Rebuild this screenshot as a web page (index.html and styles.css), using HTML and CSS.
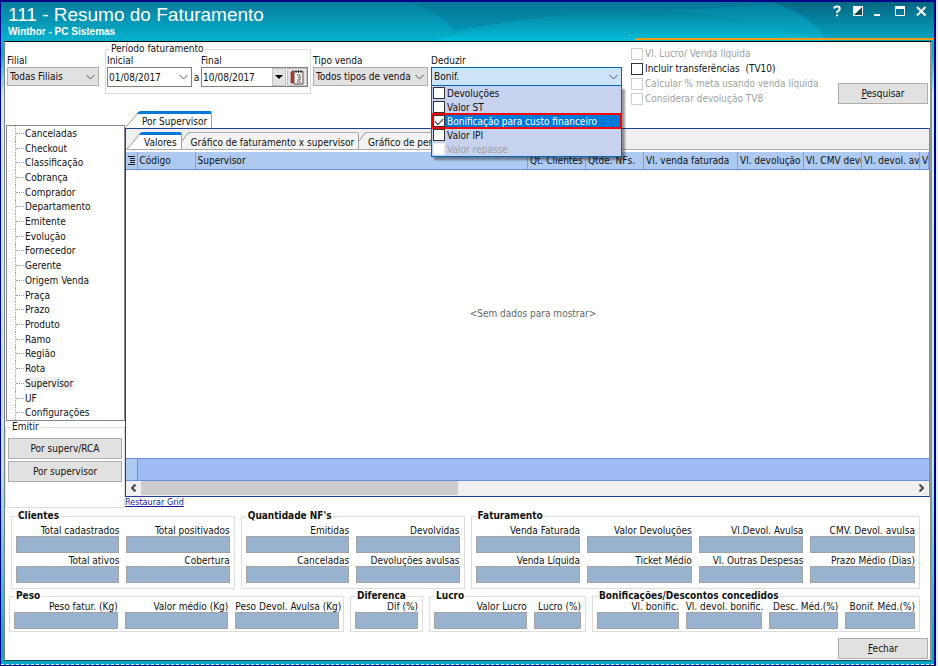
FILE: index.html
```html
<!DOCTYPE html>
<html lang="pt-BR">
  <head>
    <meta charset="UTF-8" />
    <meta name="viewport" content="width=device-width, initial-scale=1.0" />
    <title>111 - Resumo do Faturamento</title>
    <link rel="stylesheet" href="styles.css">
  </head>
  <body>
    <div class="window">
      <header class="titlebar">
        <svg class="waves" viewBox="0 0 932 39" preserveAspectRatio="none" aria-hidden="true">
          <defs>
            <linearGradient id="sea" x1="0" y1="0" x2="0" y2="1">
              <stop offset="0" stop-color="#067d9f" />
              <stop offset="1" stop-color="#06b2cd" />
            </linearGradient>
            <linearGradient id="deep" x1="0" y1="0" x2="0" y2="1">
              <stop offset="0" stop-color="#056783" />
              <stop offset="1" stop-color="#06a5c0" />
            </linearGradient>
            <linearGradient id="crest" x1="0" y1="0" x2="0" y2="1">
              <stop offset="0" stop-color="#067f9c" />
              <stop offset="1" stop-color="#04bfdb" />
            </linearGradient>
          </defs>
          <rect width="932" height="39" fill="url(#sea)" />
          <path d="M408 0 Q440 10 452 29 Q540 12 640 9 Q740 6 785 0 Z" fill="#046a8a" opacity=".3" />
          <path d="M430 39 C500 20 570 12 640 9 C690 7 740 15 820 39 Z" fill="url(#crest)" />
          <path d="M770 0 Q812 14 824 39 L932 39 L932 0 Z" fill="url(#deep)" />
        </svg>
        <div class="titles">
          <h1>111 - Resumo do Faturamento</h1>
          <p>Winthor - PC Sistemas</p>
        </div>
        <div class="window-buttons">
          <button type="button" aria-label="Ajuda">
            <svg width="12" height="12" viewBox="0 0 12 12"><path d="M3 3.5 Q3.5 1.5 6 1.5 Q8.8 1.5 8.8 3.8 Q8.8 5.2 7.2 6 Q6 6.6 6 8 M6 9.5 V11.2" fill="none" stroke="#fff" stroke-width="2" /></svg>
          </button>
          <button type="button" aria-label="Tema">
            <svg width="12" height="12" viewBox="0 0 12 12"><path d="M1.5 1.5 H10.5 V10.5 H1.5 Z" fill="#0a4a60" stroke="#fff" /><path d="M1 1 H11 L1 11 Z" fill="#fff" /></svg>
          </button>
          <button type="button" aria-label="Minimizar">
            <svg width="12" height="12" viewBox="0 0 12 12"><path d="M1 9 H7 V11 H1 Z" fill="#fff" /></svg>
          </button>
          <button type="button" aria-label="Maximizar">
            <svg width="12" height="12" viewBox="0 0 12 12"><path d="M1.5 2 V10.5 H10.5 V2" fill="none" stroke="#fff" /><path d="M1 1 H11 V4 H1 Z" fill="#fff" /></svg>
          </button>
          <button type="button" aria-label="Fechar janela">
            <svg width="12" height="12" viewBox="0 0 12 12"><path d="M2 2 L10.5 10.5 M10.5 2 L2 10.5" stroke="#fff" stroke-width="2" /></svg>
          </button>
        </div>
      </header>

      <main class="client">
        <form class="toolbar">
          <div class="field filial">
            <label for="filial">Filial</label>
            <span class="select-box">
              <select id="filial"><option>Todas Filiais</option></select>
              <svg class="chevron" width="9" height="6" viewBox="0 0 9 6"><path d="M.5 1 L4.5 5 L8.5 1" /></svg>
            </span>
          </div>

          <fieldset class="period">
            <legend>Período faturamento</legend>
            <div class="period-row">
              <div class="field start">
                <label for="inicial">Inicial</label>
                <span class="date-box">
                  <input id="inicial" type="text" value="01/08/2017" />
                  <svg class="chevron" width="9" height="6" viewBox="0 0 9 6"><path d="M.5 1 L4.5 5 L8.5 1" /></svg>
                </span>
              </div>
              <span class="until">a</span>
              <div class="field end">
                <label for="final">Final</label>
                <span class="date-box">
                  <input id="final" type="text" value="10/08/2017" />
                  <button type="button" class="drop" aria-label="Abrir data final">
                    <svg width="8" height="4" viewBox="0 0 8 4"><path d="M0 0 H8 L4 4 Z" fill="#000" /></svg>
                  </button>
                  <button type="button" class="calendar" aria-label="Calendário">
                    <svg width="14" height="16" viewBox="0 0 14 16">
                      <path d="M1 3 L3.5 1.500 V14 H1 Z" fill="#b03a2e" stroke="#7b241c" stroke-width=".6" />
                      <path d="M4 2.500 H13 V15 H4 Z" fill="#f2f0ec" stroke="#55504c" />
                      <path d="M6 1 V4 M8.500 1 V4 M11 1 V4" stroke="#333" />
                      <path d="M7 6 H10 V8.500 H8 M10 8.500 V11 H7 M7 13 H11" fill="none" stroke="#666" />
                    </svg>
                  </button>
                </span>
              </div>
            </div>
          </fieldset>

          <div class="field tipo">
            <label for="tipo">Tipo venda</label>
            <span class="select-box">
              <select id="tipo"><option>Todos tipos de venda</option></select>
              <svg class="chevron" width="9" height="6" viewBox="0 0 9 6"><path d="M.5 1 L4.5 5 L8.5 1" /></svg>
            </span>
          </div>

          <div class="field deduzir">
            <label for="deduzir">Deduzir</label>
            <span class="select-box open">
              <select id="deduzir"><option>Bonif.</option></select>
              <svg class="chevron" width="9" height="6" viewBox="0 0 9 6"><path d="M.5 1 L4.5 5 L8.5 1" /></svg>
            </span>
            <div class="dropdown">
              <label><input type="checkbox" />Devoluções</label>
              <label><input type="checkbox" />Valor ST</label>
              <label class="current"><input type="checkbox" checked />Bonificação para custo financeiro</label>
              <label><input type="checkbox" />Valor IPI</label>
              <label class="disabled"><input type="checkbox" disabled />Valor repasse</label>
            </div>
          </div>

          <div class="options">
            <label class="disabled"><input type="checkbox" disabled />Vl. Lucro/ Venda líquida</label>
            <label><input type="checkbox" />Incluir transferências &nbsp;(TV10)</label>
            <label class="disabled"><input type="checkbox" disabled />Calcular % meta usando venda líquida</label>
            <label class="disabled"><input type="checkbox" disabled />Considerar devolução TV8</label>
          </div>

          <button type="button" class="btn search"><u>P</u>esquisar</button>
        </form>

        <div class="workspace">
          <aside class="sidebar">
            <ul class="tree">
              <li><span>Canceladas</span></li>
              <li><span>Checkout</span></li>
              <li><span>Classificação</span></li>
              <li><span>Cobrança</span></li>
              <li><span>Comprador</span></li>
              <li><span>Departamento</span></li>
              <li><span>Emitente</span></li>
              <li><span>Evolução</span></li>
              <li><span>Fornecedor</span></li>
              <li><span>Gerente</span></li>
              <li><span>Origem Venda</span></li>
              <li><span>Praça</span></li>
              <li><span>Prazo</span></li>
              <li><span>Produto</span></li>
              <li><span>Ramo</span></li>
              <li><span>Região</span></li>
              <li><span>Rota</span></li>
              <li class="selected"><span>Supervisor</span></li>
              <li><span>UF</span></li>
              <li><span>Configurações</span></li>
            </ul>
            <fieldset class="emit">
              <legend>Emitir</legend>
              <button type="button" class="btn">Por superv/RCA</button>
              <button type="button" class="btn">Por supervisor</button>
            </fieldset>
          </aside>

          <section class="content">
            <div class="tabs outer-tabs">
              <button type="button" class="tab active">
                <svg width="16" height="17" viewBox="0 0 16 17"><path d="M0 17 L13 2 Q14 0 16 0 V17 Z" fill="#fff" /><path d="M0 17 L13 2 L15 1" class="edge" /><path d="M12 3 Q13 0 16 0 V3 Z" fill="#0078d7" /></svg>
                <span>Por Supervisor</span>
              </button>
            </div>
            <div class="panel">
              <div class="tabs inner-tabs">
                <button type="button" class="tab active">
                  <svg width="16" height="17" viewBox="0 0 16 17"><path d="M0 17 L13 2 Q14 0 16 0 V17 Z" fill="#fff" /><path d="M0 17 L13 2 L15 1" class="edge" /><path d="M12 3 Q13 0 16 0 V3 Z" fill="#0078d7" /></svg>
                  <span>Valores</span>
                </button>
                <button type="button" class="tab">
                  <svg width="8" height="17" viewBox="0 0 8 17"><path d="M0 17 V9 L6 1 L8 .5 V17 Z" fill="#f3f3f3" /><path d="M0 9 L6 1 L8 .5" class="edge" /></svg>
                  <span>Gráfico de faturamento x supervisor</span>
                </button>
                <button type="button" class="tab">
                  <svg width="8" height="17" viewBox="0 0 8 17"><path d="M0 17 V9 L6 1 L8 .5 V17 Z" fill="#f3f3f3" /><path d="M0 9 L6 1 L8 .5" class="edge" /></svg>
                  <span>Gráfico de percentuais</span>
                </button>
              </div>

              <table class="grid-head">
                <colgroup>
                  <col class="c-mark" /><col class="c-code" /><col /><col class="c-num" /><col class="c-num" />
                  <col class="c-sale" /><col class="c-dev" /><col class="c-num" /><col class="c-num" /><col class="c-last" />
                </colgroup>
                <thead>
                  <tr>
                    <th class="mark">
                      <svg width="7" height="9" viewBox="0 0 7 9"><path d="M0 .5 H7 M2 2.500 H7 M2 4.500 H7 M2 6.500 H7 M0 8.500 H7" stroke="#222" /></svg>
                    </th>
                    <th>Código</th>
                    <th>Supervisor</th>
                    <th>Qt. Clientes</th>
                    <th>Qtde. NFs.</th>
                    <th>Vl. venda faturada</th>
                    <th>Vl. devolução</th>
                    <th>Vl. CMV devolução</th>
                    <th>Vl. devol. avulsa</th>
                    <th>V</th>
                  </tr>
                </thead>
              </table>
              <div class="grid-empty">&lt;Sem dados para mostrar&gt;</div>
              <div class="grid-footer"></div>
              <div class="scrollbar">
                <button type="button" aria-label="Rolar para a esquerda"><svg width="5" height="8" viewBox="0 0 5 8"><path d="M4.5 .5 L1 4 L4.5 7.500" /></svg></button>
                <div class="track"><div class="thumb"></div></div>
                <button type="button" aria-label="Rolar para a direita"><svg width="5" height="8" viewBox="0 0 5 8"><path d="M.5 .5 L4 4 L.5 7.500" /></svg></button>
              </div>
            </div>
            <a class="restore" href="#">Restaurar Grid</a>
          </section>
        </div>

        <div class="groups totals">
          <fieldset>
            <legend>Clientes</legend>
            <div class="cells two">
              <label>Total cadastrados<input type="text" readonly /></label>
              <label>Total positivados<input type="text" readonly /></label>
              <label>Total ativos<input type="text" readonly /></label>
              <label>Cobertura<input type="text" readonly /></label>
            </div>
          </fieldset>
          <fieldset>
            <legend>Quantidade NF's</legend>
            <div class="cells two">
              <label>Emitidas<input type="text" readonly /></label>
              <label>Devolvidas<input type="text" readonly /></label>
              <label>Canceladas<input type="text" readonly /></label>
              <label>Devoluções avulsas<input type="text" readonly /></label>
            </div>
          </fieldset>
          <fieldset>
            <legend>Faturamento</legend>
            <div class="cells four">
              <label>Venda Faturada<input type="text" readonly /></label>
              <label>Valor Devoluções<input type="text" readonly /></label>
              <label>Vl.Devol. Avulsa<input type="text" readonly /></label>
              <label>CMV. Devol. avulsa<input type="text" readonly /></label>
              <label>Venda Líquida<input type="text" readonly /></label>
              <label>Ticket Médio<input type="text" readonly /></label>
              <label>Vl. Outras Despesas<input type="text" readonly /></label>
              <label>Prazo Médio (Dias)<input type="text" readonly /></label>
            </div>
          </fieldset>
        </div>

        <div class="groups rates">
          <fieldset>
            <legend>Peso</legend>
            <div class="cells three">
              <label>Peso fatur. (Kg)<input type="text" readonly /></label>
              <label>Valor médio (Kg)<input type="text" readonly /></label>
              <label>Peso Devol. Avulsa (Kg)<input type="text" readonly /></label>
            </div>
          </fieldset>
          <fieldset>
            <legend>Diferenca</legend>
            <div class="cells">
              <label>Dif (%)<input type="text" readonly /></label>
            </div>
          </fieldset>
          <fieldset>
            <legend>Lucro</legend>
            <div class="cells profit">
              <label>Valor Lucro<input type="text" readonly /></label>
              <label>Lucro (%)<input type="text" readonly /></label>
            </div>
          </fieldset>
          <fieldset>
            <legend>Bonificações/Descontos concedidos</legend>
            <div class="cells bonus">
              <label>Vl. bonific.<input type="text" readonly /></label>
              <label>Vl. devol. bonific.<input type="text" readonly /></label>
              <label>Desc. Méd.(%)<input type="text" readonly /></label>
              <label>Bonif. Méd.(%)<input type="text" readonly /></label>
            </div>
          </fieldset>
        </div>

        <footer class="actions">
          <button type="button" class="btn"><u>F</u>echar</button>
        </footer>
      </main>
      <div class="bottom-edge"></div>
    </div>
  </body>
</html>
```

FILE: styles.css
```css
* {
  margin: 0;
  padding: 0;
  box-sizing: border-box;
}

body,
button,
input,
select {
  font-family: "DejaVu Sans Condensed", "DejaVu Sans", sans-serif;
  font-size: 10px;
  color: #111;
}

body {
  background: #e4eef8;
}

/* window frame */
.window {
  min-height: 100vh;
  margin-right: 2px;
  border: solid #00008b;
  border-width: 2px 2px 1px 1px;
  background: linear-gradient(#06b2cd 8%, #c8f2f8 14%, #b8ecf4 70%, #08aac6 97%);
  display: flex;
  flex-direction: column;
}

.titlebar {
  position: relative;
  height: 39px;
  display: flex;
  justify-content: space-between;
  color: #fff;
  font-family: "Liberation Sans", sans-serif;
}

.titlebar::after {
  content: "";
  position: absolute;
  right: 0;
  bottom: 1px;
  width: 32%;
  height: 2px;
  background: #f09a1a;
}

.waves {
  position: absolute;
  width: 100%;
  height: 100%;
}

.titles {
  position: relative;
  padding: 2px 7px;
}

.titles h1 {
  font-size: 19px;
  font-weight: normal;
  line-height: 22px;
}

.titles p {
  font-size: 10px;
  font-weight: bold;
  line-height: 12px;
}

.window-buttons {
  position: relative;
  display: flex;
  align-items: flex-start;
  gap: 9px;
  padding: 3px 7px;
}

.window-buttons button {
  width: 12px;
  height: 12px;
  border: none;
  background: none;
}

.window-buttons svg {
  display: block;
}

.client {
  flex: 1;
  display: flex;
  flex-direction: column;
  margin: 0 2px 0 3px;
  border: 1px solid #000;
  border-left-color: #808080;
  border-right: 2px solid #909090;
  border-bottom-color: #1c4a50;
  background: #fff;
}

.bottom-edge {
  height: 4px;
  background: #04a6c2;
  border-bottom: 1px dashed #d8f0f4;
}

/* shared controls */
fieldset {
  min-width: 0;
  border: 1px solid #dcdcdc;
}

.btn {
  height: 21px;
  border: 1px solid #adadad;
  background: #e1e1e1;
}

.disabled {
  color: #a0a0a0;
}

input[type="checkbox"] {
  appearance: none;
  flex: none;
  width: 12px;
  height: 12px;
  border: 1px solid #333;
  background: #fff;
}

input[type="checkbox"]:disabled {
  border-color: #ccc;
}

input[type="checkbox"]:checked::after {
  content: "";
  display: block;
  width: 7px;
  height: 4px;
  margin: 2px 1px;
  border: solid #222;
  border-width: 0 0 1px 1px;
  transform: rotate(-45deg);
}

.chevron {
  fill: none;
  stroke: #555;
}

/* toolbar */
.toolbar {
  height: 69px;
  display: flex;
  align-items: flex-start;
  padding: 0 2px;
}

.field {
  position: relative;
  display: flex;
  flex-direction: column;
}

.toolbar > .field {
  padding-top: 13px;
}

.field > label {
  line-height: 12px;
}

.select-box {
  position: relative;
  display: flex;
}

.select-box select {
  appearance: none;
  width: 100%;
  height: 19px;
  padding: 0 2px;
  border: 1px solid #adadad;
  border-radius: 0;
  background: #e1e1e1;
}

.select-box .chevron {
  position: absolute;
  right: 4px;
  top: 7px;
}

.select-box.open select {
  border-color: #0067b8;
  background: #cce4f7;
}

.filial {
  width: 92px;
  margin-right: 6px;
}

.period {
  width: 206px;
  height: 51px;
  padding: 0 1px;
  margin: 1px 2px 0 0;
}

.period legend {
  margin-left: 3px;
  padding: 0 1px;
  line-height: 12px;
}

.period-row {
  display: flex;
  align-items: flex-end;
}

.start {
  width: 85px;
}

.end {
  width: 107px;
}

.until {
  width: 9px;
  text-align: center;
  line-height: 18px;
}

.date-box {
  display: flex;
  align-items: center;
  height: 20px;
  border: 1px solid #808080;
  background: #fff;
}

.date-box input {
  flex: 1;
  min-width: 0;
  padding: 0 1px;
  border: none;
}

.date-box .chevron {
  margin-right: 3px;
}

.date-box button {
  height: 18px;
  border: 1px solid #c4c4c4;
  background: #e4e4e4;
  display: flex;
  align-items: center;
  justify-content: center;
}

.drop {
  width: 14px;
}

.calendar {
  width: 20px;
  margin-left: 1px;
}

.tipo {
  width: 115px;
  margin-right: 3px;
}

.deduzir {
  width: 191px;
  margin-right: 9px;
}

.dropdown {
  position: absolute;
  top: 100%;
  left: 0;
  right: 0;
  z-index: 2;
  border: 1px solid #0067b8;
  border-top: none;
  background: #c7d2ef;
  box-shadow: 3px 3px 2px rgba(0, 0, 0, 0.4);
}

.dropdown label {
  display: flex;
  align-items: center;
  gap: 2px;
  height: 14px;
  padding-left: 1px;
}

.dropdown label.current {
  outline: 2px solid #f00;
  outline-offset: -1px;
  background: #0078d7;
  color: #fff;
}

.dropdown input:disabled {
  border-color: #eee;
}

.options {
  flex: 1;
  padding-top: 4px;
}

.options label {
  display: flex;
  align-items: center;
  gap: 2px;
  height: 15px;
  white-space: nowrap;
}

.search {
  width: 90px;
  margin-top: 41px;
}

/* sidebar */
.workspace {
  flex: 1;
  display: flex;
}

.sidebar {
  width: 120px;
  padding-top: 14px;
  display: flex;
  flex-direction: column;
}

.tree {
  flex: 1;
  display: flex;
  flex-direction: column;
  margin-left: 1px;
  border: 1px solid #828790;
  list-style: none;
}

.tree li {
  flex: 1;
  display: flex;
  align-items: center;
  margin-left: 8px;
  border-left: 1px dotted #a0a0a0;
}

.tree li::before {
  content: "";
  width: 8px;
  border-top: 1px dotted #a0a0a0;
}

.tree li span {
  padding: 0 2px 0 1px;
  line-height: 13px;
}

.tree .selected span {
  background: #f0f0f0;
}

.emit {
  height: 87px;
  padding: 5px 2px 0;
  display: flex;
  flex-direction: column;
  gap: 2px;
}

.emit legend {
  margin-left: 2px;
  padding: 0 2px;
  line-height: 12px;
}

/* tabs and grid */
.content {
  flex: 1;
  min-width: 0;
  display: flex;
  flex-direction: column;
  align-items: flex-start;
}

.tabs {
  display: flex;
}

.tab {
  display: flex;
  height: 17px;
  border: none;
  background: none;
}

.tab span {
  padding: 0 4px 0 1px;
  border-top: 1px solid #b0b0b0;
  border-right: 1px solid #a0a0a0;
  border-radius: 0 2px 0 0;
  background: #f3f3f3;
  line-height: 19px;
  height: 17px;
}

.tab.active span {
  border-top: 3px solid #0078d7;
  background: #fff;
  line-height: 15px;
}

.edge {
  fill: none;
  stroke: #999;
}

.panel {
  flex: 1;
  align-self: stretch;
  display: flex;
  flex-direction: column;
  border: 1px solid #1c3f94;
  border-right-color: #7090d8;
}

.inner-tabs {
  height: 23px;
  padding: 3px 1px 0;
  background: linear-gradient(#f0f0f0 20px, #aaa 20px, #aaa 21px, #fff 21px);
}

.grid-head {
  width: 100%;
  table-layout: fixed;
  border-collapse: collapse;
}

.grid-head th {
  height: 17px;
  padding: 0 2px;
  border-right: 1px solid #7e9fdc;
  border-bottom: 1px solid #6c8fd8;
  background: #aecaf0;
  font-weight: normal;
  text-align: left;
  white-space: nowrap;
  overflow: hidden;
}

.c-mark {
  width: 11px;
}

.c-code {
  width: 58px;
}

.c-num {
  width: 58px;
}

.c-sale {
  width: 94px;
}

.c-dev {
  width: 66px;
}

.c-last {
  width: 9px;
}

.mark svg {
  display: block;
}

.grid-empty {
  flex: 1;
  display: flex;
  align-items: center;
  justify-content: center;
  padding-left: 11px;
  color: #666;
}

.grid-footer {
  height: 23px;
  border: solid #6c8fd8;
  border-width: 1px 0;
  background: linear-gradient(90deg, #aecaf0 11px, #6c8fd8 11px, #6c8fd8 12px, #9fbdf4 12px);
}

.scrollbar {
  display: flex;
  height: 15px;
  background: #f0f0f0;
}

.scrollbar button {
  width: 15px;
  border: none;
  background: none;
}

.scrollbar path {
  fill: none;
  stroke: #444;
  stroke-width: 2;
}

.track {
  flex: 1;
}

.thumb {
  width: 41%;
  height: 14px;
  background: #cdcdcd;
}

.restore {
  color: #1a1a9c;
  font-size: 9px;
  line-height: 11px;
}

/* totals */
.groups {
  display: grid;
}

.groups fieldset {
  padding: 0 4px 2px;
}

.groups legend {
  margin-left: 1px;
  padding: 0 1px;
  font-weight: bold;
  line-height: 12px;
  white-space: nowrap;
}

.totals {
  grid-template-columns: 224fr 224fr 450fr;
  gap: 6px;
  padding: 2px 10px 0 6px;
}

.totals fieldset {
  padding: 4px 4px 5px;
}

.rates {
  grid-template-columns: 335fr 73fr 157fr 328fr;
  gap: 6px;
  padding: 1px 10px 0 4px;
}

.cells {
  display: grid;
  gap: 3px 7px;
}

.two {
  grid-template-columns: 1fr 1fr;
}

.three {
  grid-template-columns: 1fr 1fr 1fr;
}

.four {
  grid-template-columns: 1fr 1fr 1fr 1fr;
}

.profit {
  grid-template-columns: 92fr 47fr;
}

.bonus {
  grid-template-columns: 82fr 77fr 69fr 70fr;
}

.cells label {
  display: flex;
  flex-direction: column;
  min-width: 0;
  text-align: right;
  line-height: 10px;
  white-space: nowrap;
}

.cells input {
  width: 100%;
  height: 17px;
  border: 1px solid #a3a3a3;
  background: #99b2d0;
}

.actions {
  display: flex;
  justify-content: flex-end;
  padding: 6px 2px 1px;
}

.actions .btn {
  width: 90px;
}
```
